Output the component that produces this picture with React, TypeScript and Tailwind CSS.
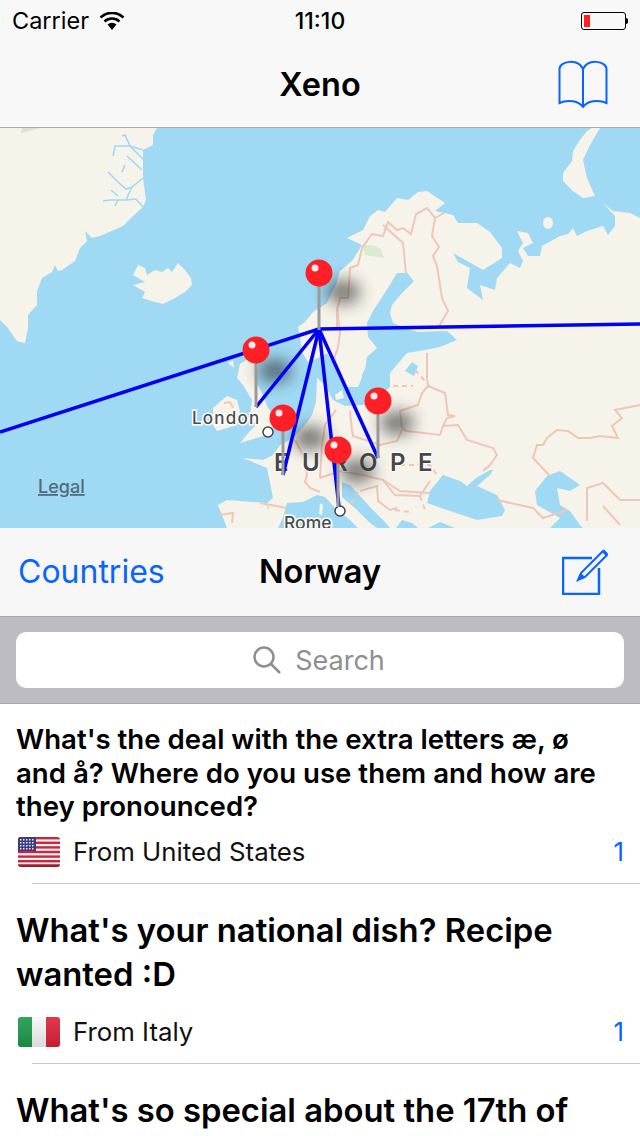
import React from "react";

const BLUE = "#0a64ff";
const LAND = "#f6f3ea";
const WATER = "#a0d9f4";

const eurasia =
  "M298,327 L305,322 L313,312 L327,303 L336,285 L340,271 L352,261 L362,245 L347,238 L363,230 L370,216 L378,210 L385,212 L397,198 L408,200 L418,192 L427,191 L445,203 L435,211 L453,215 L458,223 L477,223 L490,232 L502,248 L502,258 L483,270 L453,253 L458,262 L470,268 L467,288 L483,300 L480,285 L495,290 L497,278 L510,263 L520,268 L523,261 L518,251 L523,243 L517,231 L528,233 L533,243 L523,248 L528,256 L540,256 L542,246 L560,236 L568,234 L573,228 L577,236 L587,231 L603,226 L608,235 L615,226 L615,216 L603,203 L613,211 L630,213 L640,218 L640,528 L227,528 L218,505 L227,500 L267,503 L273,498 L267,468 L243,458 L263,460 L273,455 L280,445 L293,438 L305,425 L312,415 L316,402 L317,378 L325,385 L333,400 L345,406 L363,405 L378,398 L390,387 L390,373 L407,353 L425,350 L440,347 L457,340 L447,331 L417,332 L393,323 L390,313 L392,305 L402,293 L414,281 L407,273 L397,273 L388,288 L373,311 L367,323 L368,337 L377,348 L367,357 L365,370 L358,387 L347,387 L333,363 L327,353 L318,358 L308,362 L302,352 L300,338 Z";

const greenland =
  "M0,128 L157,128 L153,135 L153,145 L143,150 L143,178 L146,200 L143,207 L133,216 L123,226 L100,236 L92,238 L85,231 L87,241 L80,248 L75,261 L62,270 L58,271 L55,265 L52,272 L42,278 L37,291 L37,305 L28,315 L28,328 L25,343 L17,341 L8,328 L0,320 Z";

const iceland =
  "M138,265 L145,268 L147,275 L155,270 L162,272 L168,268 L172,272 L178,263 L185,270 L191,278 L192,285 L185,292 L175,298 L163,304 L155,302 L142,298 L145,292 L133,285 L145,282 L133,275 Z";

const svalbard =
  "M587,131 L592,128 L600,128 L590,145 L583,160 L587,178 L595,196 L583,198 L573,191 L563,181 L563,173 L572,161 L573,151 L580,140 Z";

const britain =
  "M240,364 L250,358 L258,366 L255,380 L262,393 L268,408 L275,418 L272,430 L263,436 L240,443 L250,431 L256,425 L250,415 L252,400 L243,385 L237,378 Z";

const ireland = "M213,408 L227,396 L237,400 L240,411 L237,425 L217,431 L213,425 Z";

const waters = [
  "M278,528 L282,520 L285,510 L287,503 L303,502 L317,495 L325,497 L335,508 L350,520 L358,528 Z",
  "M342,482 L350,485 L370,507 L383,520 L390,528 L377,528 L370,523 L357,510 L342,497 Z",
  "M430,491 L443,475 L460,481 L467,486 L476,478 L490,470 L493,470 L490,475 L477,486 L497,495 L505,510 L502,516 L477,520 L447,510 L427,503 Z",
  "M535,491 L547,476 L560,471 L580,485 L570,491 L557,488 L560,505 L570,511 L580,525 L583,528 L550,528 L560,518 L537,505 Z",
  "M396,528 L402,520 L412,523 L418,528 Z",
  "M428,528 L440,522 L455,528 Z",
  "M405,371 L412,362 L418,366 L414,376 Z",
];

const borders = [
  "M337,328 L337,310 L340,298 L348,298 L350,268 L358,265 L362,248 L372,234 L383,236 L388,222 L397,230 L403,228 L411,234 L416,214 L427,208 L435,218 L444,213",
  "M383,225 L403,243 L406,273",
  "M435,218 L432,236 L439,247 L433,256 L437,266 L442,298 L448,311 L438,328",
  "M337,307 L340,333 L338,347 L333,362",
  "M427,353 L427,378 L428,386 L445,393 L448,415 L455,416 L447,418 L443,426 L458,425 L467,440 L493,448 L497,455 L490,465 L483,471",
  "M443,426 L440,435 L407,431 L402,428 L400,411 L418,405 L422,393 L428,386",
  "M640,405 L615,410 L622,418 L612,426 L618,438 L600,436 L590,438 L578,438 L568,431 L557,430 L547,438 L543,445 L537,445 L533,458 L550,476",
  "M587,521 L587,488 L603,483 L620,500 L640,500",
  "M603,506 L620,525",
  "M497,500 L533,508 L543,518 L567,510",
  "M260,503 L287,508",
  "M220,515 L233,513 L232,523",
  "M307,475 L305,482 L310,488 L320,492",
  "M295,440 L303,455 L307,475",
  "M320,478 L340,471 L363,475 L383,480 L400,491 L430,493",
  "M350,411 L352,431 L353,436 L380,445 L397,441 L402,430",
  "M383,480 L395,495 L420,496 L430,481",
  "M360,491 L377,486 L378,501 L390,510 L397,508",
  "M336,410 L325,425 L322,445 L320,478",
  "M224,403 L230,402 L233,408",
];

const dashed = [
  "M393,386 L413,386",
  "M415,370 L427,383",
  "M400,465 L430,465 L437,475",
  "M420,496 L425,510",
  "M358,492 L350,505",
  "M395,510 L410,512",
];

const pins = [
  { x: 319, y: 273, sx: 343, sy: 292 },
  { x: 256, y: 350, sx: 275, sy: 371 },
  { x: 283, y: 418, sx: 310, sy: 438 },
  { x: 378, y: 401, sx: 397, sy: 423 },
  { x: 338, y: 450, sx: 357, sy: 471 },
];

const routes = [
  [640, 324],
  [0, 432],
  [256, 407],
  [283, 475],
  [339, 507],
  [378, 458],
];

const WorldMap = () => (
  <svg viewBox="0 128 640 400" className="block w-[640px] h-[400px] shrink-0">
    <defs>
      <filter id="pinShadow" x="-150%" y="-150%" width="400%" height="400%">
        <feGaussianBlur stdDeviation="8" />
      </filter>
    </defs>
    <rect x="0" y="128" width="640" height="400" fill={WATER} />
    <path d={greenland} fill={LAND} />
    <path
      d="M143,178 L132,187 L126,189 L118,182 L108,172 M132,187 L126,200 L110,200 L103,201 M126,200 L136,199 L143,207 M111,190 L118,196 M115,206 L118,200 M143,150 L130,146 L125,135 L122,136 M130,146 L115,146 L113,156 M130,146 L144,160 M127,156 L142,170 M125,165 L122,172"
      fill="none"
      stroke={WATER}
      strokeWidth="1.6"
    />
    <path d="M21,133 L40,128 L22,128 Z" fill="#d5e6c8" />
    <path d={iceland} fill={LAND} />
    <path d={svalbard} fill={LAND} />
    <ellipse cx="548" cy="223" rx="5" ry="6" fill={LAND} />
    <path d={eurasia} fill={LAND} />
    <path d={britain} fill={LAND} />
    <path d={ireland} fill={LAND} />
    <path d="M8,328 L27,328 L25,343 L17,341 Z" fill={LAND} />
    <path d="M228,363 L233,360 L234,368 Z" fill={LAND} />
    <path d="M317,378 L322,388 L333,400 L318,402 Z" fill={LAND} />
    <path d="M335,395 L342,390 L344,398 L336,400 Z" fill={LAND} />
    <path d="M362,375 L366,367 L367,376 L363,383 Z" fill={WATER} />
    {waters.map((d) => (
      <path key={d} d={d} fill={WATER} />
    ))}
    <path d="M320,503 L323,505 L322,515 L319,514 Z" fill={LAND} />
    <path d="M362,245 L372,245 L381,249 L384,258 L377,257 L365,255 Z" fill="#dcebd0" />
    <path d="M266,505 L270,507 L268,510 Z" fill="#d5e6c8" />
    {borders.map((d) => (
      <path key={d} d={d} fill="none" stroke="#f0c6b9" strokeWidth="2" />
    ))}
    {dashed.map((d) => (
      <path key={d} d={d} fill="none" stroke="#f0c6b9" strokeWidth="2" strokeDasharray="5 4" />
    ))}
    <text
      x="192"
      y="424"
      fontSize="17"
      fontWeight="500"
      letterSpacing="1.2"
      fill="#4d4d4d"
      stroke="#ffffff"
      strokeWidth="3"
      paintOrder="stroke"
    >
      London
    </text>
    <text
      x="284"
      y="529"
      fontSize="17.5"
      fontWeight="500"
      fill="#4d4d4d"
      stroke="#ffffff"
      strokeWidth="3"
      paintOrder="stroke"
    >
      Rome
    </text>
    <text
      x="274 302 332 359 390 418"
      y="471"
      fontSize="24"
      fontWeight="600"
      fill="#474747"
      stroke="#ffffff"
      strokeWidth="2"
      paintOrder="stroke"
    >
      EUROPE
    </text>
    <text x="38" y="493" fontSize="18" fontWeight="500" fill="#516b79" textDecoration="underline">
      Legal
    </text>
    <circle cx="268" cy="432" r="5" fill="#ffffff" stroke="#444444" strokeWidth="1.5" />
    <circle cx="340" cy="511" r="5" fill="#ffffff" stroke="#444444" strokeWidth="1.5" />
    {pins.map((p) => (
      <ellipse
        key={p.x}
        cx={p.sx}
        cy={p.sy}
        rx="17"
        ry="12"
        fill="#333333"
        opacity="0.65"
        filter="url(#pinShadow)"
      />
    ))}
    {routes.map(([x, y]) => (
      <line key={x} x1="319" y1="329" x2={x} y2={y} stroke="#0000f5" strokeWidth="3.5" />
    ))}
    {pins.map((p) => (
      <g key={p.x}>
        <rect x={p.x - 1.5} y={p.y + 10} width="3" height="47" fill="#9a9a9a" />
        <circle cx={p.x} cy={p.y} r="13.5" fill="#ff1f26" />
        <circle cx={p.x - 4} cy={p.y - 5} r="3.5" fill="#ffe9e9" />
      </g>
    ))}
  </svg>
);

const StatusBar = () => (
  <div className="relative flex h-10 shrink-0 items-center justify-between px-3 pt-[2px] text-black">
    <div className="flex items-center gap-[10px]">
      <span className="text-[23.5px] leading-none">Carrier</span>
      <svg width="26" height="18" viewBox="0 0 26 18">
        <path d="M13,18 L8.5,12.5 A7,7 0 0 1 17.5,12.5 Z" fill="#000" />
        <path d="M5.5,9.5 A11,11 0 0 1 20.5,9.5" fill="none" stroke="#000" strokeWidth="2.6" />
        <path d="M1.5,5.5 A16.5,16.5 0 0 1 24.5,5.5" fill="none" stroke="#000" strokeWidth="2.6" />
      </svg>
    </div>
    <span className="absolute left-1/2 -translate-x-1/2 text-[23px] font-medium leading-none">11:10</span>
    <div className="flex items-center">
      <div className="flex h-[18px] w-[45px] items-center rounded-[3px] border border-black p-[2px]">
        <div className="h-full w-[6px] bg-[#ff2020]" />
      </div>
      <div className="h-[6px] w-[2px] rounded-r-sm bg-black" />
    </div>
  </div>
);

const NavBar = () => (
  <div className="grid h-[88px] shrink-0 grid-cols-[1fr_auto_1fr] items-center border-b border-[#a9a9a9] px-8">
    <div />
    <h1 className="pt-[3px] text-[32.5px] font-semibold leading-none text-black">Xeno</h1>
    <div className="flex justify-end">
      <svg width="50" height="48" viewBox="0 0 50 48" fill="none" stroke={BLUE} strokeWidth="2">
        <path d="M25,47 C21,41 10,39 1.5,43 L1.5,9 C1.5,1 20,-2 25,9 C30,-2 48.5,1 48.5,9 L48.5,43 C40,39 29,41 25,47 Z" />
        <path d="M25,9 L25,47" />
      </svg>
    </div>
  </div>
);

const SubHeader = () => (
  <div className="grid h-[89px] shrink-0 grid-cols-[1fr_auto_1fr] items-center border-b border-[#a9a9a9] px-[18px]">
    <span className="text-[32px] leading-none text-[#0a64ff]">Countries</span>
    <span className="text-[32.5px] font-semibold leading-none text-black">Norway</span>
    <div className="flex justify-end pr-[14px]">
      <svg width="46" height="46" viewBox="0 0 46 46" fill="none">
        <path d="M30,9 L1,9 L1,45 L37,45 L37,19" stroke={BLUE} strokeWidth="2.5" />
        <path d="M16,31 L19,24 L41,2 L45,6 L23,28 Z" stroke={BLUE} strokeWidth="2" />
        <path d="M16,31 L19,24 L23,28 Z M40,3 L42,0.5 L46,4.5 L44,7 Z" fill={BLUE} />
      </svg>
    </div>
  </div>
);

const SearchBar = () => (
  <div className="flex h-[87px] shrink-0 items-center border-b border-[#a9a9a9] bg-[#bdbcc2] px-4">
    <div className="flex h-14 w-full items-center justify-center gap-[14px] rounded-[10px] bg-white pr-[2px] text-[#8e8e93]">
      <svg width="28" height="28" viewBox="0 0 28 28" fill="none" stroke="#8e8e93" strokeWidth="2.5">
        <circle cx="11" cy="11" r="9.5" />
        <path d="M18,18 L27,27" />
      </svg>
      <span className="text-[27px] leading-none">Search</span>
    </div>
  </div>
);

const UsFlag = () => (
  <svg width="42" height="30" viewBox="0 0 42 30" className="shrink-0">
    <defs>
      <clipPath id="flagUs">
        <rect width="42" height="30" rx="3" />
      </clipPath>
    </defs>
    <g clipPath="url(#flagUs)">
      <rect width="42" height="30" fill="#f6f0f0" />
      {[0, 4.6, 9.2, 13.8, 18.4, 23, 27.6].map((y) => (
        <rect key={y} y={y} width="42" height="2.4" fill="#c6283d" />
      ))}
      <rect width="18" height="14" fill="#3c3b7c" />
      {[2, 5, 8, 11].map((y) =>
        [2, 5, 8, 11, 14].map((x) => <rect key={`${x}-${y}`} x={x} y={y} width="1.5" height="1.5" fill="#e8e8f4" />),
      )}
      <rect y="27" width="42" height="3" fill="#7d1022" opacity="0.5" />
    </g>
  </svg>
);

const ItalyFlag = () => (
  <svg width="42" height="30" viewBox="0 0 42 30" className="shrink-0">
    <defs>
      <clipPath id="flagIt">
        <rect width="42" height="30" rx="3" />
      </clipPath>
      <linearGradient id="flagShade" x1="0" y1="0" x2="0" y2="1">
        <stop offset="0" stopColor="#ffffff" stopOpacity="0.1" />
        <stop offset="1" stopColor="#000000" stopOpacity="0.12" />
      </linearGradient>
    </defs>
    <g clipPath="url(#flagIt)">
      <rect width="14" height="30" fill="#1c9a4c" />
      <rect x="14" width="14" height="30" fill="#f7f7f7" />
      <rect x="28" width="14" height="30" fill="#dd2238" />
      <rect width="42" height="30" fill="url(#flagShade)" />
    </g>
  </svg>
);

interface QuestionProps {
  title: string;
  titleClass: string;
  from?: string;
  flag?: React.ReactNode;
}

const Question = ({ title, titleClass, from, flag }: QuestionProps) => (
  <div className="flex h-[179px] shrink-0 flex-col">
    <p className={titleClass}>{title}</p>
    {from && (
      <div className="mt-auto flex items-center pb-4 pl-[18px] pr-4">
        {flag}
        <span className="ml-[13px] text-[25.8px] leading-[30px] text-[#111111]">{from}</span>
        <span className="ml-auto text-[25.8px] leading-[30px] text-[#0a64ff]">1</span>
      </div>
    )}
  </div>
);

const Divider = () => <div className="ml-8 h-px shrink-0 bg-[#c8c7cc]" />;

const App = () => {
  const big = "px-4 pt-[24px] text-[32.8px] font-semibold leading-[44px] text-black";
  return (
    <div className="flex h-[1136px] w-[640px] flex-col overflow-hidden bg-white font-[Inter,sans-serif]">
      <div className="shrink-0 bg-[#f8f8f8]">
        <StatusBar />
        <NavBar />
      </div>
      <WorldMap />
      <div className="shrink-0 bg-[#f7f7f7]">
        <SubHeader />
      </div>
      <SearchBar />
      <Question
        title="What's the deal with the extra letters æ, ø and å? Where do you use them and how are they pronounced?"
        titleClass="px-4 pt-[19px] text-[27.6px] font-semibold leading-[33.5px] text-black"
        from="From United States"
        flag={<UsFlag />}
      />
      <Divider />
      <Question
        title="What's your national dish? Recipe wanted :D"
        titleClass={big}
        from="From Italy"
        flag={<ItalyFlag />}
      />
      <Divider />
      <Question title="What's so special about the 17th of May?" titleClass={big} />
    </div>
  );
};

export default App;
